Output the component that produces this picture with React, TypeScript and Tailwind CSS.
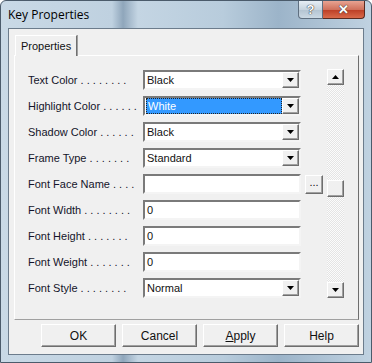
import React from "react";

const rows: { label: string; value: string; kind: "select" | "text" | "browse"; selected?: boolean }[] = [
  { label: "Text Color . . . . . . . .", value: "Black", kind: "select" },
  { label: "Highlight Color . . . . . .", value: "White", kind: "select", selected: true },
  { label: "Shadow Color . . . . . .", value: "Black", kind: "select" },
  { label: "Frame Type . . . . . . .", value: "Standard", kind: "select" },
  { label: "Font Face Name . . . .", value: "", kind: "browse" },
  { label: "Font Width . . . . . . . .", value: "0", kind: "text" },
  { label: "Font Height . . . . . . .", value: "0", kind: "text" },
  { label: "Font Weight . . . . . . .", value: "0", kind: "text" },
  { label: "Font Style . . . . . . . .", value: "Normal", kind: "select" },
];

const sunken =
  "border-2 border-t-[#7a7a7a] border-l-[#7a7a7a] border-b-[#f4f4f4] border-r-[#f4f4f4] bg-white";
const raised =
  "border border-t-white border-l-white border-b-[#6e6e6e] border-r-[#6e6e6e] bg-[#f0f0f0] shadow-[inset_-1px_-1px_0_#a0a0a0]";

const Arrow = ({ up }: { up?: boolean }) => (
  <svg width="7" height="4" viewBox="0 0 7 4">
    <path d={up ? "M0 4 L3.5 0 L7 4 Z" : "M0 0 L7 0 L3.5 4 Z"} fill="#000" />
  </svg>
);

const Field = ({ row }: { row: (typeof rows)[number] }) => {
  if (row.kind === "select") {
    return (
      <div className={`${sunken} flex h-[20px] w-[158px] items-stretch`}>
        <div className="flex flex-1 items-center pl-[1px]">
          {row.selected ? (
            <div className="flex h-full w-full items-center border border-dotted border-[#222] bg-[#3399ff] pl-[1px] text-white">
              {row.value}
            </div>
          ) : (
            <span className="pl-[1px]">{row.value}</span>
          )}
        </div>
        <div className={`${raised} flex w-[17px] items-center justify-center`}>
          <Arrow />
        </div>
      </div>
    );
  }
  if (row.kind === "browse") {
    return (
      <div className="flex items-center gap-[4px]">
        <div className={`${sunken} h-[20px] w-[158px]`} />
        <div className={`${raised} flex h-[19px] w-[18px] items-center justify-center pb-[3px] text-[11px]`}>...</div>
      </div>
    );
  }
  return (
    <div className={`${sunken} flex h-[20px] w-[158px] items-center pl-[2px]`}>{row.value}</div>
  );
};

export default function App() {
  return (
    <div
      className="relative h-[363px] w-[372px] overflow-hidden rounded-t-[6px] border border-[#4b5b6b] bg-[linear-gradient(90deg,#c9d9e6_0%,#bfd1e0_30%,#8fa6bb_33%,#c4d5e3_37%,#b8ccdc_60%,#9cb4c9_75%,#c0d2e1_100%)] text-[11px] text-[#111]"
      style={{ fontFamily: '"Liberation Sans", Arial, sans-serif' }}
    >
      {/* title bar */}
      <div className="flex h-[27px] items-start">
        <div className="pl-[7px] pt-[5px] text-[12px] text-black" style={{ fontFamily: '"Open Sans", "Liberation Sans", sans-serif' }}>
          Key Properties
        </div>
        <div className="ml-auto mr-[6px] flex">
          <div className="flex h-[18px] w-[25px] items-center justify-center rounded-bl-[4px] border border-t-0 border-[#5f6f80] bg-[linear-gradient(180deg,#e6eef5,#c7d4df_50%,#b3c3d1_51%,#cbd9e4)] text-[13px] font-bold text-white [text-shadow:0_0_1px_#222,0_0_1px_#222]">
            ?
          </div>
          <div className="flex h-[18px] w-[42px] items-center justify-center rounded-br-[4px] border border-l-0 border-t-0 border-[#5a2a20] bg-[linear-gradient(180deg,#e8a392,#d0715c_50%,#bb3d25_51%,#d96a4a)] text-[13px] font-bold text-white [text-shadow:0_0_1px_#333,0_0_1px_#333]">
            ✕
          </div>
        </div>
      </div>

      {/* client area */}
      <div className="mx-[7px] flex h-[327px] flex-col border border-[#6c7c8c] bg-[#f0f0f0]">
        {/* tab strip */}
        <div className="flex pl-[6px] pt-[6px]">
          <div className="relative z-10 -mb-[1px] flex h-[21px] items-center border border-b-0 border-t-white border-l-white border-r-[#707070] bg-[#f0f0f0] px-[5px] pt-[1px] shadow-[1px_0_0_#a0a0a0]">
            Properties
          </div>
        </div>
        {/* tab panel */}
        <div className="ml-[5px] flex h-[265px] w-[345px] border border-t-white border-l-white border-b-[#a0a0a0] border-r-[#6e6e6e] pl-[13px] pt-[13px]">
          <div className="flex w-[298px] flex-col gap-[6px] pt-[1px]">
            {rows.map((r) => (
              <div key={r.label} className="flex h-[20px] items-center">
                <div className="w-[115px] whitespace-nowrap text-[#14142a]">{r.label}</div>
                <Field row={r} />
              </div>
            ))}
          </div>
          {/* scrollbar */}
          <div className="ml-[1px] flex h-[229px] w-[17px] flex-col bg-[#fbfbfb] bg-[linear-gradient(45deg,#e4e4e4_25%,transparent_25%,transparent_75%,#e4e4e4_75%),linear-gradient(45deg,#e4e4e4_25%,transparent_25%,transparent_75%,#e4e4e4_75%)] bg-size-[2px_2px] bg-position-[0_0,1px_1px]">
            <div className={`${raised} flex h-[16px] items-center justify-center`}>
              <Arrow up />
            </div>
            <div className="h-[95px]" />
            <div className={`${raised} h-[17px]`} />
            <div className="flex-1" />
            <div className={`${raised} flex h-[16px] items-center justify-center`}>
              <Arrow />
            </div>
          </div>
        </div>
        {/* buttons */}
        <div className="flex gap-[6px] pl-[32px] pt-[4px]">
          {["OK", "Cancel", "Apply", "Help"].map((b) => (
            <div
              key={b}
              className={`${raised} flex h-[23px] w-[75px] items-center justify-center text-[12px]`}
            >
              {b === "Apply" ? (
                <span>
                  <span className="underline">A</span>pply
                </span>
              ) : (
                b
              )}
            </div>
          ))}
        </div>
      </div>
    </div>
  );
}
